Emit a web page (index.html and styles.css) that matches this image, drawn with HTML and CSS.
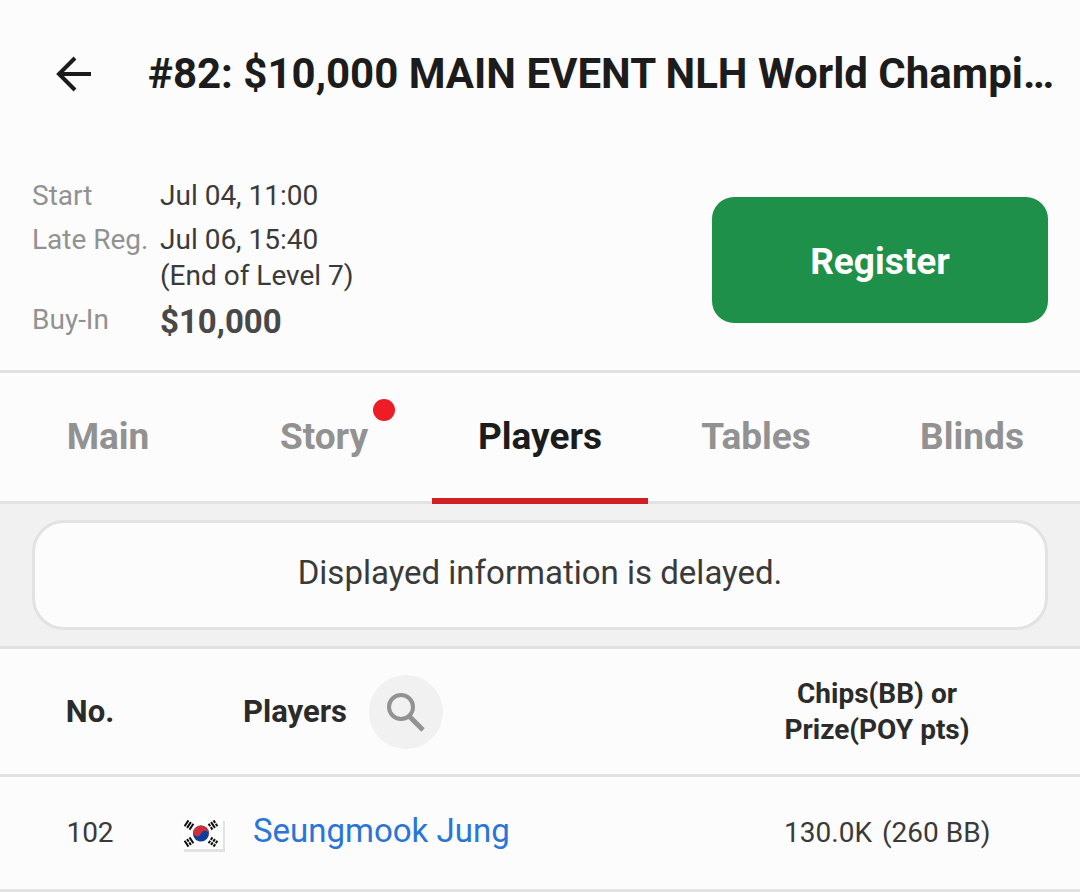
FILE: index.html
```html
<!DOCTYPE html>
<html lang="en">

<head>
    <meta charset="UTF-8">
    <meta name="viewport" content="width=device-width, initial-scale=1.0">
    <title>#82: $10,000 MAIN EVENT NLH World Championship</title>
    <link rel="stylesheet" href="styles.css">
</head>

<body>
    <header class="top-bar">
        <button class="back" type="button" aria-label="Back">
            <svg width="36" height="36" viewBox="0 0 36 36">
                <path d="M19 2 3 18l16 16M3 18h32" fill="none" stroke="currentColor" stroke-width="4" />
            </svg>
        </button>
        <h1 class="title">#82: $10,000 MAIN EVENT NLH World Champi…</h1>
    </header>

    <section class="summary">
        <dl class="info">
            <dt>Start</dt>
            <dd>Jul 04, 11:00</dd>
            <dt>Late Reg.</dt>
            <dd>Jul 06, 15:40<br>(End of Level 7)</dd>
            <dt>Buy-In</dt>
            <dd class="buy-in">$10,000</dd>
        </dl>
        <button class="register" type="button">Register</button>
    </section>

    <nav class="tabs">
        <a class="tab" href="#main">Main</a>
        <a class="tab" href="#story"><span class="tab-label">Story<span class="dot"></span></span></a>
        <a class="tab active" href="#players" aria-current="page">Players</a>
        <a class="tab" href="#tables">Tables</a>
        <a class="tab" href="#blinds">Blinds</a>
    </nav>

    <div class="notice-band">
        <p class="notice">Displayed information is delayed.</p>
    </div>

    <table class="players">
        <thead>
            <tr>
                <th class="col-no" scope="col">No.</th>
                <th class="col-name" scope="col">
                    <div class="name-head">
                        Players
                        <button class="search" type="button" aria-label="Search players">
                            <svg width="40" height="40" viewBox="0 0 40 40">
                                <circle cx="15" cy="15" r="12" fill="none" stroke="currentColor" stroke-width="4" />
                                <path d="M23 24 37 38" fill="none" stroke="currentColor" stroke-width="5" />
                            </svg>
                        </button>
                    </div>
                </th>
                <th class="col-chips" scope="col">Chips(BB) or<br>Prize(POY pts)</th>
            </tr>
        </thead>
        <tbody>
            <tr>
                <td class="col-no">102</td>
                <td class="col-name">
                    <div class="player">
                        <!-- South Korea -->
                        <svg class="flag" width="41" height="31" viewBox="0 0 41 31" role="img" aria-label="South Korea">
                            <rect width="41" height="31" fill="#fff" />
                            <g transform="rotate(20 19 15.5)">
                                <circle cx="19" cy="15.5" r="8" fill="#0c3f9c" />
                                <path d="M11 15.5a8 8 0 0 1 16 0a4 4 0 0 0-8 0a4 4 0 0 1-8 0" fill="#cd2e3a" />
                            </g>
                            <g stroke="#111" stroke-width="2">
                                <path d="M-3.5-3h7M-3.5 0h7M-3.5 3h7" transform="translate(7 7) rotate(-56)" />
                                <path d="M-3.5-3h3M.5-3h3M-3.5 0h7M-3.5 3h3M.5 3h3" transform="translate(31 7) rotate(56)" />
                                <path d="M-3.5-3h7M-3.5 0h3M.5 0h3M-3.5 3h7" transform="translate(7 24) rotate(56)" />
                                <path d="M-3.5-3h3M.5-3h3M-3.5 0h3M.5 0h3M-3.5 3h3M.5 3h3" transform="translate(31 24) rotate(-56)" />
                            </g>
                        </svg>
                        <a class="player-name" href="#player">Seungmook Jung</a>
                    </div>
                </td>
                <td class="col-chips">
                    <div class="chips">
                        <span class="amount">130.0K</span>
                        <span>(260 BB)</span>
                    </div>
                </td>
            </tr>
        </tbody>
    </table>
</body>

</html>
```

FILE: styles.css
```css
* {
    box-sizing: border-box;
}

body {
    margin: 0;
    background-color: #fcfcfc;
    color: #3a3a3a;
    font-family: Roboto, "Liberation Sans", sans-serif;
    font-size: 28px;
    line-height: 36px;
}

button {
    border: 0;
    padding: 0;
    font: inherit;
    cursor: pointer;
}

a {
    text-decoration: none;
}

/* Top bar */
.top-bar {
    display: flex;
    align-items: center;
    gap: 56px;
    height: 148px;
    padding: 0 16px 0 56px;
}

.back {
    display: flex;
    background: none;
    color: #1c1c1c;
}

.title {
    flex: 1;
    min-width: 0;
    margin: 0;
    color: #1c1c1c;
    font-size: 42px;
    line-height: 52px;
    white-space: nowrap;
    overflow: hidden;
    text-overflow: ellipsis;
}

/* Tournament summary */
.summary {
    display: flex;
    align-items: center;
    justify-content: space-between;
    padding: 30px 32px 28px;
    border-bottom: 3px solid #e2e2e2;
}

.info {
    display: grid;
    grid-template-columns: 128px auto;
    row-gap: 8px;
    margin: 0;
}

.info dt {
    color: #929292;
    white-space: nowrap;
}

.info dd {
    margin: 0;
}

.info .buy-in {
    color: #484848;
    font-size: 33px;
    font-weight: bold;
    line-height: 40px;
}

.register {
    width: 336px;
    height: 126px;
    padding-top: 4px;
    border-radius: 22px;
    background-color: #1f9049;
    color: #fff;
    font-size: 37px;
    font-weight: bold;
}

/* Tabs */
.tabs {
    display: flex;
    height: 131px;
    border-bottom: 3px solid #e2e2e2;
}

.tab {
    flex: 1;
    height: 131px;
    border-bottom: 6px solid transparent;
    color: #929292;
    font-size: 37px;
    font-weight: bold;
    line-height: 128px;
    text-align: center;
}

.tab.active {
    border-color: #d01f27;
    color: #1c1c1c;
}

.tab-label {
    position: relative;
}

.dot {
    position: absolute;
    top: -16px;
    right: -27px;
    width: 22px;
    height: 22px;
    border-radius: 50%;
    background-color: #ee1c25;
}

/* Notice */
.notice-band {
    padding: 16px 32px;
    border-bottom: 3px solid #e2e2e2;
    background-color: #f1f1f1;
}

.notice {
    margin: 0;
    padding: 32px 32px 36px;
    border: 3px solid #e2e2e2;
    border-radius: 32px;
    background-color: #fcfcfc;
    font-size: 33px;
    text-align: center;
}

/* Players table */
.players {
    width: 100%;
    border-collapse: separate;
    border-spacing: 0;
    table-layout: fixed;
}

.players th,
.players td {
    padding: 0;
    border-bottom: 3px solid #e2e2e2;
}

.players th {
    height: 128px;
    color: #2b2b2b;
}

.players td {
    height: 115px;
}

.players .col-no {
    width: 180px;
    text-align: center;
}

.players th.col-no,
.players th.col-name {
    font-size: 31px;
}

.players .col-chips {
    width: 406px;
    text-align: center;
}

.name-head {
    display: flex;
    align-items: center;
    gap: 22px;
    padding-left: 63px;
}

.search {
    display: flex;
    align-items: center;
    justify-content: center;
    width: 74px;
    height: 74px;
    border-radius: 50%;
    background-color: #f1f1f1;
    color: #929292;
}

.player {
    display: flex;
    align-items: center;
    gap: 30px;
    padding-left: 2px;
}

.flag {
    box-shadow: 2px 3px 0 #e2e2e2;
}

.player-name {
    padding-bottom: 4px;
    color: #2a75d8;
    font-size: 33px;
}

.chips {
    display: grid;
    grid-template-columns: 1fr 1fr;
    gap: 10px;
    text-align: left;
}

.amount {
    text-align: right;
}
```
